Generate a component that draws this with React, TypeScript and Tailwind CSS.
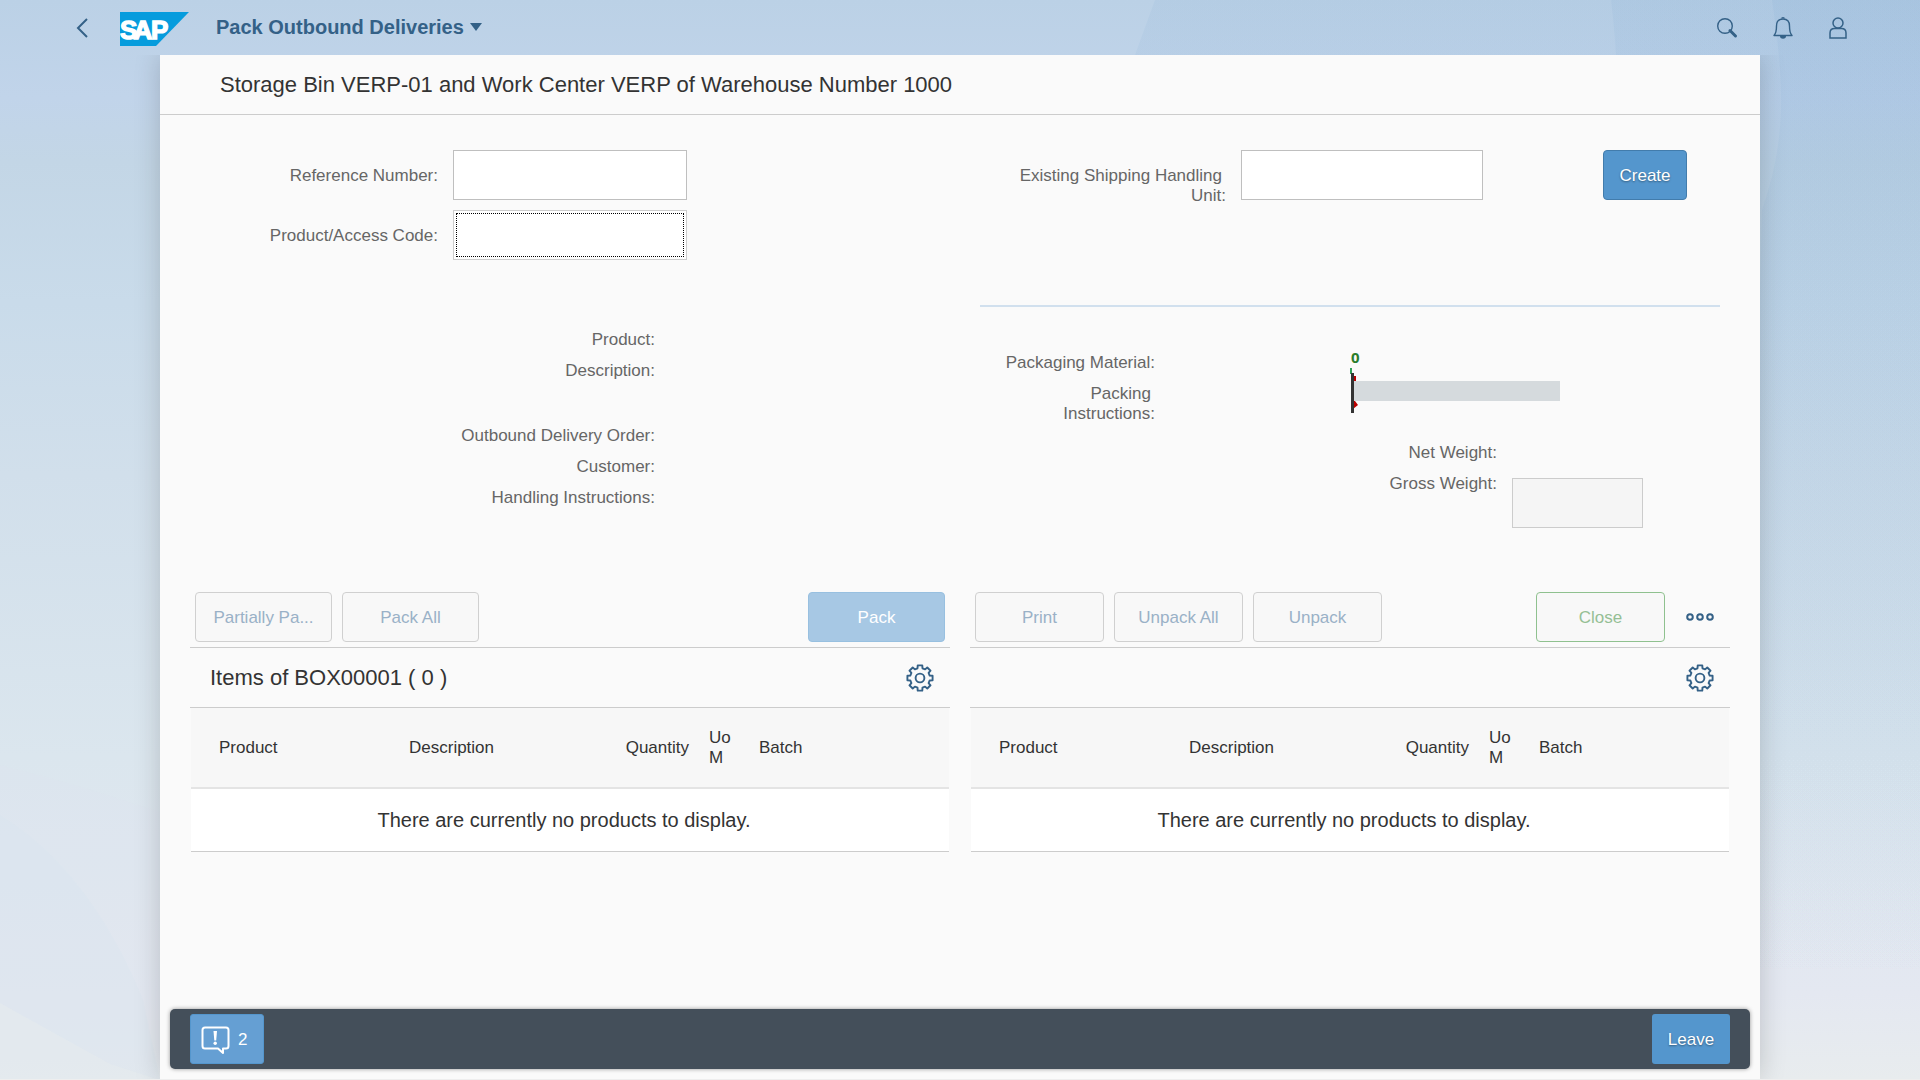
import { useId, type ReactNode } from "react";

const inputClass =
  "h-[50px] w-full border border-[#bfbfbf] bg-white px-3 text-[17px] text-[#333333] focus:outline-none";

function Backdrop() {
  return (
    <svg
      className="absolute inset-0 h-full w-full"
      viewBox="0 0 1920 1080"
      preserveAspectRatio="none"
      aria-hidden="true"
    >
      <defs>
        <linearGradient id="sky" x1="0" y1="0" x2="0" y2="1">
          <stop offset="0" stopColor="#bbd1e6" />
          <stop offset="0.09" stopColor="#c1d4ea" />
          <stop offset="0.15" stopColor="#c3d6e6" />
          <stop offset="0.28" stopColor="#c9dbea" />
          <stop offset="0.44" stopColor="#d1dfeb" />
          <stop offset="0.7" stopColor="#dbe6ee" />
          <stop offset="0.92" stopColor="#e4e8f1" />
          <stop offset="1" stopColor="#e8ecee" />
        </linearGradient>
        <linearGradient id="shade" x1="0" y1="0" x2="0" y2="1">
          <stop offset="0" stopColor="#4a86c0" stopOpacity="0.06" />
          <stop offset="0.6" stopColor="#4a86c0" stopOpacity="0.03" />
          <stop offset="0.92" stopColor="#4a86c0" stopOpacity="0" />
        </linearGradient>
      </defs>
      <rect width="1920" height="1080" fill="url(#sky)" />
      <path d="M1155 0 L1135 55 L1100 1080 H1920 V0 Z" fill="url(#shade)" />
      <path d="M1611 0 Q1616 40 1617 80 L1640 1080 H1920 V0 Z" fill="url(#shade)" />
      <path d="M1772 0 C1785 90 1786 140 1762 210 L1740 1080 H1920 V0 Z" fill="url(#shade)" />
      <path d="M0 765 Q80 785 160 812 V1080 H0 Z" fill="#dfe4f0" fillOpacity="0.3" />
      <path d="M0 815 Q90 870 143 1000 L160 1080 H0 Z" fill="#d8e3ee" fillOpacity="0.3" />
      <path d="M0 1003 L110 1064 L160 1080 H0 Z" fill="#e8edee" fillOpacity="0.4" />
    </svg>
  );
}

function SapLogo() {
  return (
    <svg width="69" height="34" viewBox="0 0 69 34" role="img" aria-label="SAP">
      <path d="M0 0 H69 L36 34 H0 Z" fill="#069cdd" />
      <text
        x="0 13.5 31"
        y="26.5"
        fontFamily="Liberation Sans, sans-serif"
        fontWeight="700"
        fontSize="26"
        fill="#ffffff"
        stroke="#ffffff"
        strokeWidth="1.4"
      >
        SAP
      </text>
    </svg>
  );
}

function BackIcon() {
  return (
    <svg width="12" height="20" viewBox="0 0 12 20" fill="none" stroke="#346187" strokeWidth="2">
      <path d="M11 1 L2 10 L11 19" />
    </svg>
  );
}

function SearchIcon() {
  return (
    <svg width="22" height="22" viewBox="0 0 22 22" fill="none" stroke="#346187" strokeWidth="1.4">
      <circle cx="9" cy="9" r="7.3" />
      <path d="M14 13.5 L19.5 19" strokeWidth="3" strokeLinecap="round" />
    </svg>
  );
}

function BellIcon() {
  return (
    <svg width="22" height="24" viewBox="0 0 22 24" fill="none" stroke="#346187" strokeWidth="1.4">
      <path
        d="M2 19.5 C4.5 17 4.5 14 4.5 10 C4.5 5.5 7 3 11 3 C15 3 17.5 5.5 17.5 10 C17.5 14 17.5 17 20 19.5 Z"
        strokeLinejoin="round"
      />
      <path d="M9 2.5 A2 1.6 0 0 1 13 2.5 Z" fill="#346187" stroke="none" />
      <path d="M8 20 H14 A3 2.8 0 0 1 8 20 Z" fill="#346187" stroke="none" />
    </svg>
  );
}

function UserIcon() {
  return (
    <svg width="20" height="24" viewBox="0 0 20 24" fill="none" stroke="#346187" strokeWidth="1.5">
      <circle cx="10" cy="7" r="5" />
      <path d="M2 22 V17 Q2 12.5 6.5 12.5 H13.5 Q18 12.5 18 17 V22 Z" />
    </svg>
  );
}

function GearIcon() {
  const teeth = 8;
  const points: string[] = [];
  for (let i = 0; i < teeth; i++) {
    const base = (i * 2 * Math.PI) / teeth - Math.PI / 2;
    const steps: [number, number][] = [
      [-0.25, 10],
      [-0.18, 12.8],
      [0.18, 12.8],
      [0.25, 10],
    ];
    for (const [angle, radius] of steps) {
      const x = 14 + radius * Math.cos(base + angle);
      const y = 14 + radius * Math.sin(base + angle);
      points.push(`${x.toFixed(2)},${y.toFixed(2)}`);
    }
  }
  return (
    <svg
      width="28"
      height="28"
      viewBox="0 0 28 28"
      fill="none"
      stroke="#346187"
      strokeWidth="1.9"
      strokeLinejoin="round"
    >
      <polygon points={points.join(" ")} />
      <circle cx="14" cy="14" r="4.4" />
    </svg>
  );
}

function OverflowIcon() {
  return (
    <svg width="28" height="10" viewBox="0 0 28 10" fill="none" stroke="#346187" strokeWidth="2">
      <circle cx="4" cy="5" r="2.8" />
      <circle cx="14" cy="5" r="2.8" />
      <circle cx="24" cy="5" r="2.8" />
    </svg>
  );
}

function MessageIcon() {
  return (
    <svg
      width="29"
      height="28"
      viewBox="0 0 29 28"
      fill="none"
      stroke="#ffffff"
      strokeWidth="2"
      strokeLinejoin="round"
    >
      <path d="M4 1.5 H25 Q27.5 1.5 27.5 4 V20 Q27.5 22.5 25 22.5 H22 V27 L17 22.5 H4 Q1.5 22.5 1.5 20 V4 Q1.5 1.5 4 1.5 Z" />
      <path d="M12.5 5 H16 L15.2 14.5 H13.3 Z" fill="#ffffff" stroke="none" />
      <circle cx="14.2" cy="17.3" r="1.7" fill="#ffffff" stroke="none" />
    </svg>
  );
}

function BulletChart() {
  return (
    <svg className="h-[70px] w-[214px]" viewBox="0 0 214 70" role="img" aria-label="Weight 0">
      <text x="2" y="16" fontFamily="Open Sans, sans-serif" fontWeight="700" fontSize="15" fill="#2b7d2b">
        0
      </text>
      <rect x="1" y="21" width="2" height="6" fill="#30a15a" />
      <rect x="5" y="34" width="206" height="20" fill="#d5dadd" />
      <rect x="4" y="29" width="3" height="5" fill="#bb0000" />
      <path d="M4 54 H6 L9 58 L4 62 Z" fill="#bb0000" />
      <rect x="2" y="26" width="3" height="40" fill="#333333" />
    </svg>
  );
}

function Info({ children }: { children: ReactNode }) {
  return <dt className="pl-4 text-right leading-5">{children}</dt>;
}

function ActionButton({ children, className }: { children: ReactNode; className: string }) {
  return (
    <button
      type="button"
      disabled
      className={`h-[50px] truncate rounded-[4px] border px-[14px] pt-px text-[17px] ${className}`}
    >
      {children}
    </button>
  );
}

function ItemsTable({ title, label }: { title: string; label: string }) {
  return (
    <section>
      <div className="flex h-[60px] items-center justify-between border-b border-[#cccccc] pr-4 pl-5">
        <h2 className="text-[22px] text-[#333333]">{title}</h2>
        <button type="button" aria-label={`Settings for ${label}`}>
          <GearIcon />
        </button>
      </div>
      <div className="px-px">
        <table className="w-full table-fixed border-collapse text-[#333333]" aria-label={label}>
          <colgroup>
            <col className="w-[208px]" />
            <col className="w-[200px]" />
            <col className="w-[100px]" />
            <col className="w-[50px]" />
            <col />
          </colgroup>
          <thead>
            <tr className="h-20 border-b-2 border-[#e4e4e4] bg-[#f7f7f7] text-left text-[17px] leading-5">
              <th className="pl-7 font-normal">Product</th>
              <th className="px-[10px] font-normal">Description</th>
              <th className="px-[10px] text-right font-normal">Quantity</th>
              <th className="px-[10px] font-normal break-all">UoM</th>
              <th className="px-[10px] font-normal">Batch</th>
            </tr>
          </thead>
          <tbody>
            <tr className="h-[63px] border-b border-[#cccccc] bg-white">
              <td colSpan={5} className="pr-3 text-center text-xl">
                There are currently no products to display.
              </td>
            </tr>
          </tbody>
        </table>
      </div>
    </section>
  );
}

export default function App() {
  const id = useId();
  const ghost = "border-[#d0d0d0] bg-[#f8f8f8] text-[#9ab1c7]";
  return (
    <div className="relative isolate flex min-h-screen flex-col font-['Liberation_Sans',Arial,sans-serif]">
      <div className="absolute inset-0 -z-10">
        <Backdrop />
      </div>

      <header className="flex h-[55px] items-center pr-[72px] pl-[76px]">
        <button type="button" aria-label="Back">
          <BackIcon />
        </button>
        <a href="#home" className="ml-8 pt-[3px]">
          <SapLogo />
        </a>
        <button
          type="button"
          className="ml-[27px] flex items-center gap-[6px] pb-[2px] text-xl font-bold text-[#346187]"
        >
          Pack Outbound Deliveries
          <svg width="12" height="8" viewBox="0 0 12 8" fill="#346187" aria-hidden="true">
            <path d="M0 0 H12 L6 8 Z" />
          </svg>
        </button>
        <div className="ml-auto flex items-center gap-[34px]">
          <button type="button" aria-label="Search">
            <SearchIcon />
          </button>
          <button type="button" aria-label="Notifications">
            <BellIcon />
          </button>
          <button type="button" aria-label="User">
            <UserIcon />
          </button>
        </div>
      </header>

      <div className="flex flex-1 flex-col overflow-clip border-b border-[#eeeeee] px-10 xl:px-[160px]">
        <main className="flex flex-1 flex-col bg-[#fafafa] shadow-[0_0_25px_rgba(0,0,0,0.18)]">
          <div className="flex h-[60px] items-center border-b border-[#cccccc] px-[60px]">
            <h1 className="text-[22px] text-[#333333]">
              Storage Bin VERP-01 and Work Center VERP of Warehouse Number 1000
            </h1>
          </div>

          <div className="grid grid-cols-2 gap-x-5 px-[30px] pt-[35px] text-[17px] text-[#666666]">
            <div>
              <div className="grid grid-cols-[248fr_234fr_248fr] items-center gap-x-[15px] gap-y-[10px]">
                <label htmlFor={`${id}-ref`} className="pt-px text-right">
                  Reference Number:
                </label>
                <input id={`${id}-ref`} type="text" className={inputClass} />
                <span />
                <label htmlFor={`${id}-code`} className="pt-px text-right">
                  Product/Access Code:
                </label>
                <div className="border border-[#cccccc] bg-white p-[2px]">
                  <input
                    id={`${id}-code`}
                    type="text"
                    className="block h-11 w-full border border-dotted border-black bg-white px-3 focus:outline-none"
                  />
                </div>
                <span />
              </div>
              <div className="mt-[70px] grid grid-cols-[465fr_295fr]">
                <dl className="flex flex-col gap-[11px]">
                  <Info>Product:</Info>
                  <Info>Description:</Info>
                  <div className="h-[23px]" />
                  <Info>Outbound Delivery Order:</Info>
                  <Info>Customer:</Info>
                  <Info>Handling Instructions:</Info>
                </dl>
              </div>
            </div>

            <div>
              <div className="grid grid-cols-[256fr_242fr_232fr] items-start gap-x-[15px]">
                <label htmlFor={`${id}-hu`} className="pt-4 text-right leading-5">
                  <span className="block pr-1">Existing Shipping Handling</span> Unit:
                </label>
                <input id={`${id}-hu`} type="text" className={inputClass} />
                <div className="pl-[105px]">
                  <button
                    type="button"
                    className="h-[50px] w-[84px] rounded-[4px] border border-[#427cac] bg-[#5496cd] pt-px text-[17px] text-white text-shadow-[0_1px_2px_rgba(0,0,0,0.4)]"
                  >
                    Create
                  </button>
                </div>
              </div>
              <hr className="mx-[10px] mt-[99px] border-t-2 border-[#d1e0ee]" />
              <div className="mt-10 grid grid-cols-[185fr_575fr]">
                <dl className="flex flex-col gap-[11px] pt-[6px]">
                  <Info>Packaging Material:</Info>
                  <Info>
                    <span className="block pr-1">Packing</span> Instructions:
                  </Info>
                </dl>
                <div>
                  <div className="pl-[194px]">
                    <BulletChart />
                  </div>
                  <div className="mt-[25px] grid grid-cols-[342fr_131fr_72fr] items-start gap-x-[15px] leading-5">
                    <span className="pt-px text-right">Net Weight:</span>
                    <span />
                    <span />
                    <label htmlFor={`${id}-gross`} className="pt-[11px] text-right">
                      Gross Weight:
                    </label>
                    <input
                      id={`${id}-gross`}
                      type="text"
                      disabled
                      className="mt-[15px] h-[50px] w-full border border-[#cccccc] bg-[#f5f5f5] px-3"
                    />
                  </div>
                </div>
              </div>
            </div>
          </div>

          <div className="mt-[59px] mb-10 grid grid-cols-2 gap-x-5 px-[30px]">
            <div>
              <div className="flex h-[61px] items-center gap-[10px] border-b border-[#cccccc] px-[5px]">
                <ActionButton className={`w-[137px] ${ghost}`}>Partially Pa...</ActionButton>
                <ActionButton className={`w-[137px] ${ghost}`}>Pack All</ActionButton>
                <ActionButton className="ml-auto w-[137px] border-[#98c0e0] bg-[#a7c8e4] text-white">
                  Pack
                </ActionButton>
              </div>
              <ItemsTable title="Items of BOX00001 ( 0 )" label="Items to pack" />
            </div>
            <div>
              <div className="flex h-[61px] items-center gap-[10px] border-b border-[#cccccc] px-[5px]">
                <ActionButton className={`w-[129px] ${ghost}`}>Print</ActionButton>
                <ActionButton className={`w-[129px] ${ghost}`}>Unpack All</ActionButton>
                <ActionButton className={`w-[129px] ${ghost}`}>Unpack</ActionButton>
                <ActionButton className="ml-auto w-[129px] border-[#8fc18f] bg-[#f8f8f8] text-[#95bf95]">
                  Close
                </ActionButton>
                <button
                  type="button"
                  aria-label="More actions"
                  className="flex h-[50px] w-[50px] items-center justify-center"
                >
                  <OverflowIcon />
                </button>
              </div>
              <ItemsTable title="" label="Packed items" />
            </div>
          </div>

          <footer className="mx-[10px] mt-auto mb-[10px] flex h-[60px] items-center justify-between rounded-[5px] bg-[#444f5a] px-5 text-[17px] text-white shadow-[0_0_4px_rgba(0,0,0,0.4)]">
            <button
              type="button"
              aria-label="2 messages"
              className="flex h-[50px] w-[74px] items-center gap-2 rounded-[3px] border border-[#5496cd] bg-[#659fd3] pt-px pl-[10px]"
            >
              <MessageIcon />
              2
            </button>
            <button
              type="button"
              className="h-[50px] w-[78px] rounded-[3px] bg-[#5496cd] pt-px text-shadow-[0_1px_2px_rgba(0,0,0,0.4)]"
            >
              Leave
            </button>
          </footer>
        </main>
      </div>
    </div>
  );
}
